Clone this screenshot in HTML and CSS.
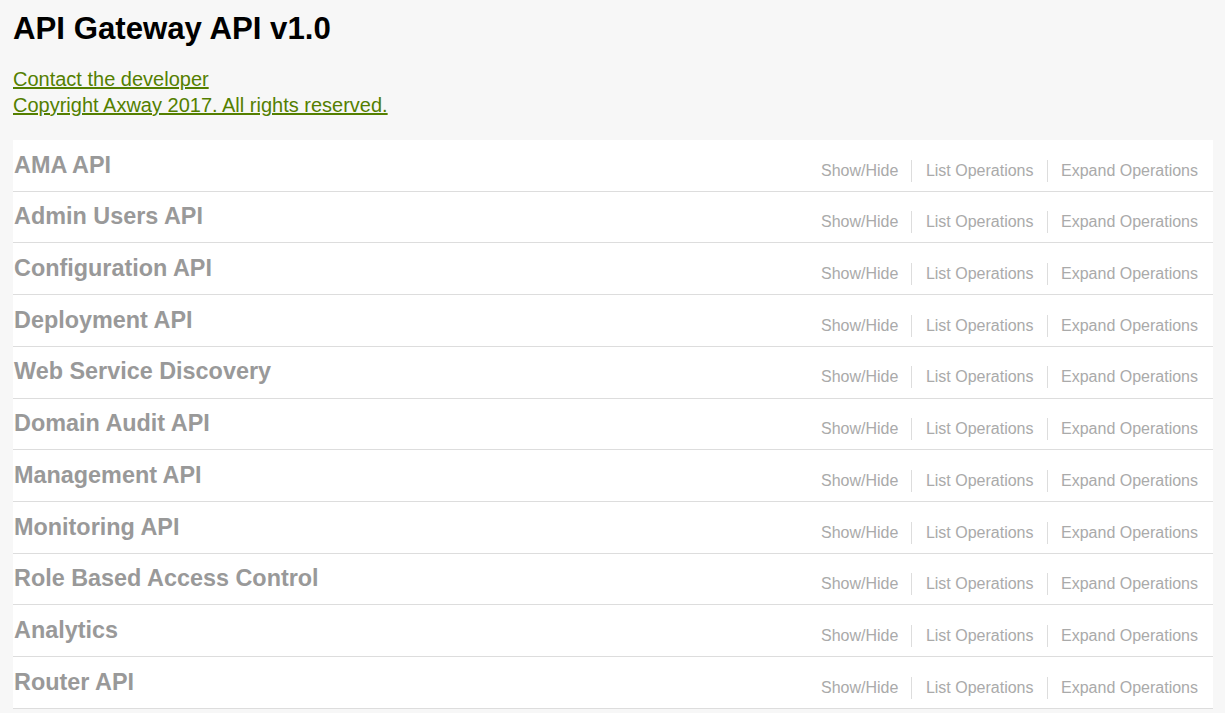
FILE: index.html
```html
<!DOCTYPE html>
<html>
<head>
<meta charset="utf-8">
<link rel="stylesheet" href="styles.css">
</head>
<body>
<div class="page">
  <h1 class="title">API Gateway API v1.0</h1>
  <div class="info">
    <a href="#" class="link">Contact the developer</a>
    <a href="#" class="link">Copyright Axway 2017. All rights reserved.</a>
  </div>
  <ul class="resources">
    <li class="resource"><h2 class="name">AMA API</h2><ul class="options"><li>Show/Hide</li><li>List Operations</li><li>Expand Operations</li></ul></li>
    <li class="resource"><h2 class="name">Admin Users API</h2><ul class="options"><li>Show/Hide</li><li>List Operations</li><li>Expand Operations</li></ul></li>
    <li class="resource"><h2 class="name">Configuration API</h2><ul class="options"><li>Show/Hide</li><li>List Operations</li><li>Expand Operations</li></ul></li>
    <li class="resource"><h2 class="name">Deployment API</h2><ul class="options"><li>Show/Hide</li><li>List Operations</li><li>Expand Operations</li></ul></li>
    <li class="resource"><h2 class="name">Web Service Discovery</h2><ul class="options"><li>Show/Hide</li><li>List Operations</li><li>Expand Operations</li></ul></li>
    <li class="resource"><h2 class="name">Domain Audit API</h2><ul class="options"><li>Show/Hide</li><li>List Operations</li><li>Expand Operations</li></ul></li>
    <li class="resource"><h2 class="name">Management API</h2><ul class="options"><li>Show/Hide</li><li>List Operations</li><li>Expand Operations</li></ul></li>
    <li class="resource"><h2 class="name">Monitoring API</h2><ul class="options"><li>Show/Hide</li><li>List Operations</li><li>Expand Operations</li></ul></li>
    <li class="resource"><h2 class="name">Role Based Access Control</h2><ul class="options"><li>Show/Hide</li><li>List Operations</li><li>Expand Operations</li></ul></li>
    <li class="resource"><h2 class="name">Analytics</h2><ul class="options"><li>Show/Hide</li><li>List Operations</li><li>Expand Operations</li></ul></li>
    <li class="resource"><h2 class="name">Router API</h2><ul class="options"><li>Show/Hide</li><li>List Operations</li><li>Expand Operations</li></ul></li>
  </ul>
</div>
</body>
</html>
```
FILE: styles.css
```css
html, body {
  margin: 0;
  padding: 0;
  background: #f7f7f7;
  font-family: "Liberation Sans", Arial, sans-serif;
}
.page {
  padding: 11px 12px 0 13px;
}
.title {
  margin: 0;
  font-size: 31.2px;
  line-height: 36px;
  font-weight: bold;
  color: #000;
}
.info {
  margin-top: 19px;
  display: flex;
  flex-direction: column;
  align-items: flex-start;
}
.link {
  font-size: 20px;
  line-height: 26px;
  color: #547f00;
  text-decoration: underline;
}
.resources {
  list-style: none;
  margin: 22px 0 0 0;
  padding: 0;
  background: #fff;
}
.resource {
  height: 51.73px;
  box-sizing: border-box;
  border-bottom: 1px solid #ddd;
  display: flex;
  justify-content: space-between;
  align-items: flex-start;
  padding: 10.5px 0 0 1px;
}
.name {
  margin: 0;
  font-size: 23.4px;
  line-height: 28px;
  font-weight: bold;
  color: #999;
}
.options {
  list-style: none;
  margin: 9px 0 0 0;
  padding: 0 2px 0 0;
  display: flex;
}
.options li {
  font-size: 16px;
  line-height: 22px;
  color: #aaa;
  padding: 0 13px 0 13.5px;
  border-right: 1px solid #ddd;
}
.options li:last-child {
  border-right: none;
}
```
